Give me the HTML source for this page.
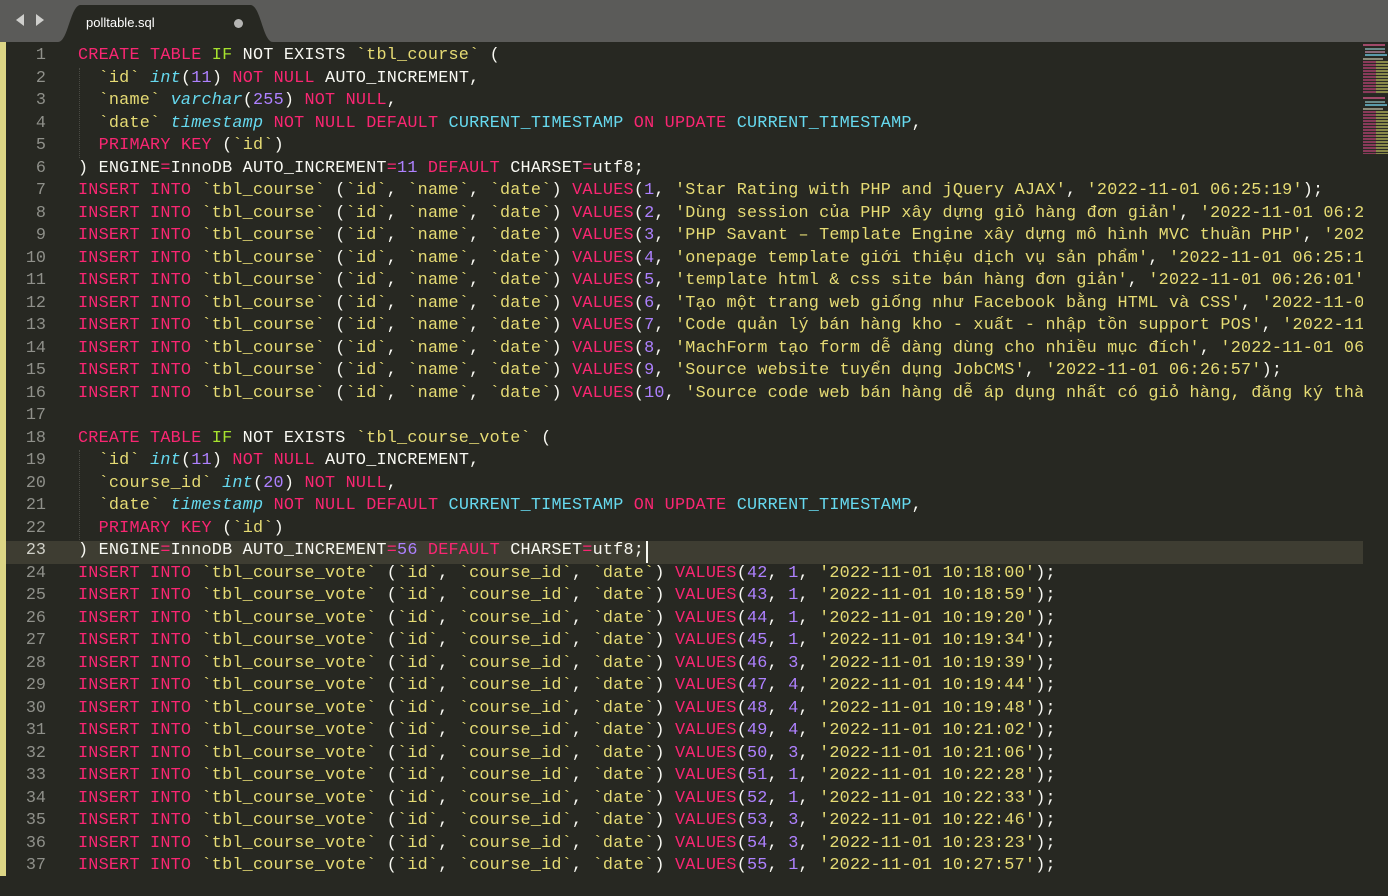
<!DOCTYPE html>
<html><head><meta charset="utf-8"><style>
html,body{margin:0;padding:0;width:1388px;height:896px;overflow:hidden;background:#272822;}
#tabbar{position:absolute;left:0;top:0;width:1388px;height:42px;background:#5b5b59;}
#tab{position:absolute;left:58px;top:5px;width:215px;height:37px;}
#tabname{position:absolute;left:86px;top:15px;color:#fff;font:13px "Liberation Sans",sans-serif;}
#dot{position:absolute;left:234px;top:19px;width:9px;height:9px;border-radius:50%;background:#b5b5b3;}
#edgebar{position:absolute;left:0;top:42px;width:6px;height:834px;background:#dcd585;}
#gutter{position:absolute;left:6px;top:46px;width:40px;}
.ln{height:22.5px;line-height:22.5px;text-align:right;color:#8f908a;font:16.8px "Liberation Mono",monospace;}
#code{position:absolute;left:78px;top:46px;width:1285px;height:850px;overflow:hidden;}
.l{height:22.5px;line-height:22.5px;white-space:pre;color:#f8f8f2;font:16.8px "Liberation Mono","DejaVu Sans Mono",monospace;letter-spacing:0.22px;}
#hl{position:absolute;left:6px;top:541px;width:1357px;height:22.5px;background:#3e3d32;}
.k{color:#f92672}.s{color:#e6db74}.n{color:#ae81ff}.t{color:#66d9ef;font-style:italic}.c{color:#66d9ef}.g{color:#a6e22e}
#guide{position:absolute;left:79px;top:68px;height:90px;border-left:1px dotted #4a4a44;}
#guide2{position:absolute;left:79px;top:450px;height:90px;border-left:1px dotted #4a4a44;}
#cursor{position:absolute;left:646px;top:541px;width:2px;height:22px;background:#f8f8f0;}
#mini{position:absolute;left:1363px;top:42px;width:25px;height:854px;background:#272822;}
.mb{position:absolute;height:2px;}
</style></head><body>
<div id="tabbar">
<svg width="60" height="42" style="position:absolute;left:0;top:0"><polygon points="24,14 16,20 24,26" fill="#cfcfcd"/><polygon points="36,14 44,20 36,26" fill="#cfcfcd"/></svg>
<svg id="tab" width="215" height="37" viewBox="0 0 215 37"><path d="M0 37 C10 37 12 2 22 0 L193 0 C203 2 205 37 215 37 Z" fill="#272822"/></svg>
<div id="tabname">polltable.sql</div><div id="dot"></div>
</div>
<div id="hl"></div>
<div id="edgebar"></div>
<div id="gutter">
<div class="ln">1</div><div class="ln">2</div><div class="ln">3</div><div class="ln">4</div><div class="ln">5</div><div class="ln">6</div><div class="ln">7</div><div class="ln">8</div><div class="ln">9</div><div class="ln">10</div><div class="ln">11</div><div class="ln">12</div><div class="ln">13</div><div class="ln">14</div><div class="ln">15</div><div class="ln">16</div><div class="ln">17</div><div class="ln">18</div><div class="ln">19</div><div class="ln">20</div><div class="ln">21</div><div class="ln">22</div><div class="ln" style="color:#d0d0c8">23</div><div class="ln">24</div><div class="ln">25</div><div class="ln">26</div><div class="ln">27</div><div class="ln">28</div><div class="ln">29</div><div class="ln">30</div><div class="ln">31</div><div class="ln">32</div><div class="ln">33</div><div class="ln">34</div><div class="ln">35</div><div class="ln">36</div><div class="ln">37</div>
</div>
<div id="guide"></div><div id="guide2"></div>
<div id="code">
<div class="l"><span class="k">CREATE</span> <span class="k">TABLE</span> <span class="g">IF</span> NOT EXISTS <span class="s">`tbl_course`</span> (</div>
<div class="l">  <span class="s">`id`</span> <span class="t">int</span>(<span class="n">11</span>) <span class="k">NOT</span> <span class="k">NULL</span> AUTO_INCREMENT,</div>
<div class="l">  <span class="s">`name`</span> <span class="t">varchar</span>(<span class="n">255</span>) <span class="k">NOT</span> <span class="k">NULL</span>,</div>
<div class="l">  <span class="s">`date`</span> <span class="t">timestamp</span> <span class="k">NOT</span> <span class="k">NULL</span> <span class="k">DEFAULT</span> <span class="c">CURRENT_TIMESTAMP</span> <span class="k">ON</span> <span class="k">UPDATE</span> <span class="c">CURRENT_TIMESTAMP</span>,</div>
<div class="l">  <span class="k">PRIMARY</span> <span class="k">KEY</span> (<span class="s">`id`</span>)</div>
<div class="l">) ENGINE<span class="k">=</span>InnoDB AUTO_INCREMENT<span class="k">=</span><span class="n">11</span> <span class="k">DEFAULT</span> CHARSET<span class="k">=</span>utf8;</div>
<div class="l"><span class="k">INSERT</span> <span class="k">INTO</span> <span class="s">`tbl_course`</span> (<span class="s">`id`</span>, <span class="s">`name`</span>, <span class="s">`date`</span>) <span class="k">VALUES</span>(<span class="n">1</span>, <span class="s">'Star Rating with PHP and jQuery AJAX'</span>, <span class="s">'2022-11-01 06:25:19'</span>);</div>
<div class="l"><span class="k">INSERT</span> <span class="k">INTO</span> <span class="s">`tbl_course`</span> (<span class="s">`id`</span>, <span class="s">`name`</span>, <span class="s">`date`</span>) <span class="k">VALUES</span>(<span class="n">2</span>, <span class="s">'Dùng session của PHP xây dựng giỏ hàng đơn giản'</span>, <span class="s">'2022-11-01 06:25:30'</span>);</div>
<div class="l"><span class="k">INSERT</span> <span class="k">INTO</span> <span class="s">`tbl_course`</span> (<span class="s">`id`</span>, <span class="s">`name`</span>, <span class="s">`date`</span>) <span class="k">VALUES</span>(<span class="n">3</span>, <span class="s">'PHP Savant – Template Engine xây dựng mô hình MVC thuần PHP'</span>, <span class="s">'2022-11-01 06:25:40'</span>);</div>
<div class="l"><span class="k">INSERT</span> <span class="k">INTO</span> <span class="s">`tbl_course`</span> (<span class="s">`id`</span>, <span class="s">`name`</span>, <span class="s">`date`</span>) <span class="k">VALUES</span>(<span class="n">4</span>, <span class="s">'onepage template giới thiệu dịch vụ sản phẩm'</span>, <span class="s">'2022-11-01 06:25:15'</span>);</div>
<div class="l"><span class="k">INSERT</span> <span class="k">INTO</span> <span class="s">`tbl_course`</span> (<span class="s">`id`</span>, <span class="s">`name`</span>, <span class="s">`date`</span>) <span class="k">VALUES</span>(<span class="n">5</span>, <span class="s">'template html &amp; css site bán hàng đơn giản'</span>, <span class="s">'2022-11-01 06:26:01'</span>);</div>
<div class="l"><span class="k">INSERT</span> <span class="k">INTO</span> <span class="s">`tbl_course`</span> (<span class="s">`id`</span>, <span class="s">`name`</span>, <span class="s">`date`</span>) <span class="k">VALUES</span>(<span class="n">6</span>, <span class="s">'Tạo một trang web giống như Facebook bằng HTML và CSS'</span>, <span class="s">'2022-11-01 06:26:10'</span>);</div>
<div class="l"><span class="k">INSERT</span> <span class="k">INTO</span> <span class="s">`tbl_course`</span> (<span class="s">`id`</span>, <span class="s">`name`</span>, <span class="s">`date`</span>) <span class="k">VALUES</span>(<span class="n">7</span>, <span class="s">'Code quản lý bán hàng kho - xuất - nhập tồn support POS'</span>, <span class="s">'2022-11-01 06:26:20'</span>);</div>
<div class="l"><span class="k">INSERT</span> <span class="k">INTO</span> <span class="s">`tbl_course`</span> (<span class="s">`id`</span>, <span class="s">`name`</span>, <span class="s">`date`</span>) <span class="k">VALUES</span>(<span class="n">8</span>, <span class="s">'MachForm tạo form dễ dàng dùng cho nhiều mục đích'</span>, <span class="s">'2022-11-01 06:26:40'</span>);</div>
<div class="l"><span class="k">INSERT</span> <span class="k">INTO</span> <span class="s">`tbl_course`</span> (<span class="s">`id`</span>, <span class="s">`name`</span>, <span class="s">`date`</span>) <span class="k">VALUES</span>(<span class="n">9</span>, <span class="s">'Source website tuyển dụng JobCMS'</span>, <span class="s">'2022-11-01 06:26:57'</span>);</div>
<div class="l"><span class="k">INSERT</span> <span class="k">INTO</span> <span class="s">`tbl_course`</span> (<span class="s">`id`</span>, <span class="s">`name`</span>, <span class="s">`date`</span>) <span class="k">VALUES</span>(<span class="n">10</span>, <span class="s">'Source code web bán hàng dễ áp dụng nhất có giỏ hàng, đăng ký thành viên'</span>);</div>
<div class="l"> </div>
<div class="l"><span class="k">CREATE</span> <span class="k">TABLE</span> <span class="g">IF</span> NOT EXISTS <span class="s">`tbl_course_vote`</span> (</div>
<div class="l">  <span class="s">`id`</span> <span class="t">int</span>(<span class="n">11</span>) <span class="k">NOT</span> <span class="k">NULL</span> AUTO_INCREMENT,</div>
<div class="l">  <span class="s">`course_id`</span> <span class="t">int</span>(<span class="n">20</span>) <span class="k">NOT</span> <span class="k">NULL</span>,</div>
<div class="l">  <span class="s">`date`</span> <span class="t">timestamp</span> <span class="k">NOT</span> <span class="k">NULL</span> <span class="k">DEFAULT</span> <span class="c">CURRENT_TIMESTAMP</span> <span class="k">ON</span> <span class="k">UPDATE</span> <span class="c">CURRENT_TIMESTAMP</span>,</div>
<div class="l">  <span class="k">PRIMARY</span> <span class="k">KEY</span> (<span class="s">`id`</span>)</div>
<div class="l">) ENGINE<span class="k">=</span>InnoDB AUTO_INCREMENT<span class="k">=</span><span class="n">56</span> <span class="k">DEFAULT</span> CHARSET<span class="k">=</span>utf8;</div>
<div class="l"><span class="k">INSERT</span> <span class="k">INTO</span> <span class="s">`tbl_course_vote`</span> (<span class="s">`id`</span>, <span class="s">`course_id`</span>, <span class="s">`date`</span>) <span class="k">VALUES</span>(<span class="n">42</span>, <span class="n">1</span>, <span class="s">'2022-11-01 10:18:00'</span>);</div>
<div class="l"><span class="k">INSERT</span> <span class="k">INTO</span> <span class="s">`tbl_course_vote`</span> (<span class="s">`id`</span>, <span class="s">`course_id`</span>, <span class="s">`date`</span>) <span class="k">VALUES</span>(<span class="n">43</span>, <span class="n">1</span>, <span class="s">'2022-11-01 10:18:59'</span>);</div>
<div class="l"><span class="k">INSERT</span> <span class="k">INTO</span> <span class="s">`tbl_course_vote`</span> (<span class="s">`id`</span>, <span class="s">`course_id`</span>, <span class="s">`date`</span>) <span class="k">VALUES</span>(<span class="n">44</span>, <span class="n">1</span>, <span class="s">'2022-11-01 10:19:20'</span>);</div>
<div class="l"><span class="k">INSERT</span> <span class="k">INTO</span> <span class="s">`tbl_course_vote`</span> (<span class="s">`id`</span>, <span class="s">`course_id`</span>, <span class="s">`date`</span>) <span class="k">VALUES</span>(<span class="n">45</span>, <span class="n">1</span>, <span class="s">'2022-11-01 10:19:34'</span>);</div>
<div class="l"><span class="k">INSERT</span> <span class="k">INTO</span> <span class="s">`tbl_course_vote`</span> (<span class="s">`id`</span>, <span class="s">`course_id`</span>, <span class="s">`date`</span>) <span class="k">VALUES</span>(<span class="n">46</span>, <span class="n">3</span>, <span class="s">'2022-11-01 10:19:39'</span>);</div>
<div class="l"><span class="k">INSERT</span> <span class="k">INTO</span> <span class="s">`tbl_course_vote`</span> (<span class="s">`id`</span>, <span class="s">`course_id`</span>, <span class="s">`date`</span>) <span class="k">VALUES</span>(<span class="n">47</span>, <span class="n">4</span>, <span class="s">'2022-11-01 10:19:44'</span>);</div>
<div class="l"><span class="k">INSERT</span> <span class="k">INTO</span> <span class="s">`tbl_course_vote`</span> (<span class="s">`id`</span>, <span class="s">`course_id`</span>, <span class="s">`date`</span>) <span class="k">VALUES</span>(<span class="n">48</span>, <span class="n">4</span>, <span class="s">'2022-11-01 10:19:48'</span>);</div>
<div class="l"><span class="k">INSERT</span> <span class="k">INTO</span> <span class="s">`tbl_course_vote`</span> (<span class="s">`id`</span>, <span class="s">`course_id`</span>, <span class="s">`date`</span>) <span class="k">VALUES</span>(<span class="n">49</span>, <span class="n">4</span>, <span class="s">'2022-11-01 10:21:02'</span>);</div>
<div class="l"><span class="k">INSERT</span> <span class="k">INTO</span> <span class="s">`tbl_course_vote`</span> (<span class="s">`id`</span>, <span class="s">`course_id`</span>, <span class="s">`date`</span>) <span class="k">VALUES</span>(<span class="n">50</span>, <span class="n">3</span>, <span class="s">'2022-11-01 10:21:06'</span>);</div>
<div class="l"><span class="k">INSERT</span> <span class="k">INTO</span> <span class="s">`tbl_course_vote`</span> (<span class="s">`id`</span>, <span class="s">`course_id`</span>, <span class="s">`date`</span>) <span class="k">VALUES</span>(<span class="n">51</span>, <span class="n">1</span>, <span class="s">'2022-11-01 10:22:28'</span>);</div>
<div class="l"><span class="k">INSERT</span> <span class="k">INTO</span> <span class="s">`tbl_course_vote`</span> (<span class="s">`id`</span>, <span class="s">`course_id`</span>, <span class="s">`date`</span>) <span class="k">VALUES</span>(<span class="n">52</span>, <span class="n">1</span>, <span class="s">'2022-11-01 10:22:33'</span>);</div>
<div class="l"><span class="k">INSERT</span> <span class="k">INTO</span> <span class="s">`tbl_course_vote`</span> (<span class="s">`id`</span>, <span class="s">`course_id`</span>, <span class="s">`date`</span>) <span class="k">VALUES</span>(<span class="n">53</span>, <span class="n">3</span>, <span class="s">'2022-11-01 10:22:46'</span>);</div>
<div class="l"><span class="k">INSERT</span> <span class="k">INTO</span> <span class="s">`tbl_course_vote`</span> (<span class="s">`id`</span>, <span class="s">`course_id`</span>, <span class="s">`date`</span>) <span class="k">VALUES</span>(<span class="n">54</span>, <span class="n">3</span>, <span class="s">'2022-11-01 10:23:23'</span>);</div>
<div class="l"><span class="k">INSERT</span> <span class="k">INTO</span> <span class="s">`tbl_course_vote`</span> (<span class="s">`id`</span>, <span class="s">`course_id`</span>, <span class="s">`date`</span>) <span class="k">VALUES</span>(<span class="n">55</span>, <span class="n">1</span>, <span class="s">'2022-11-01 10:27:57'</span>);</div>
</div>
<div id="cursor"></div>
<div id="mini">
<div class="mb" style="left:0;top:2px;width:22px;background:#a04a6a"></div>
<div class="mb" style="left:2px;top:6px;width:20px;background:#6a8a8a"></div>
<div class="mb" style="left:2px;top:9px;width:20px;background:#8a6a7a"></div>
<div class="mb" style="left:2px;top:12px;width:22px;background:#5a9aaa"></div>
<div class="mb" style="left:0;top:16px;width:20px;background:#8a8a7a"></div>
<div style="position:absolute;left:0;top:19px;width:25px;height:33px;background:repeating-linear-gradient(#8a3a5a 0 2px,#2a2b26 2px 3px)"></div>
<div style="position:absolute;left:13px;top:19px;width:12px;height:33px;background:repeating-linear-gradient(#8a8a4a 0 2px,#2a2b26 2px 3px)"></div>
<div class="mb" style="left:0;top:55px;width:22px;background:#a04a6a"></div>
<div class="mb" style="left:2px;top:59px;width:20px;background:#6a8a8a"></div>
<div class="mb" style="left:2px;top:62px;width:22px;background:#5a9aaa"></div>
<div class="mb" style="left:0;top:66px;width:20px;background:#8a8a7a"></div>
<div style="position:absolute;left:0;top:69px;width:25px;height:43px;background:repeating-linear-gradient(#8a3a5a 0 2px,#2a2b26 2px 3px)"></div>
<div style="position:absolute;left:13px;top:69px;width:12px;height:43px;background:repeating-linear-gradient(#8a8a4a 0 2px,#2a2b26 2px 3px)"></div>
</div>
</body></html>
